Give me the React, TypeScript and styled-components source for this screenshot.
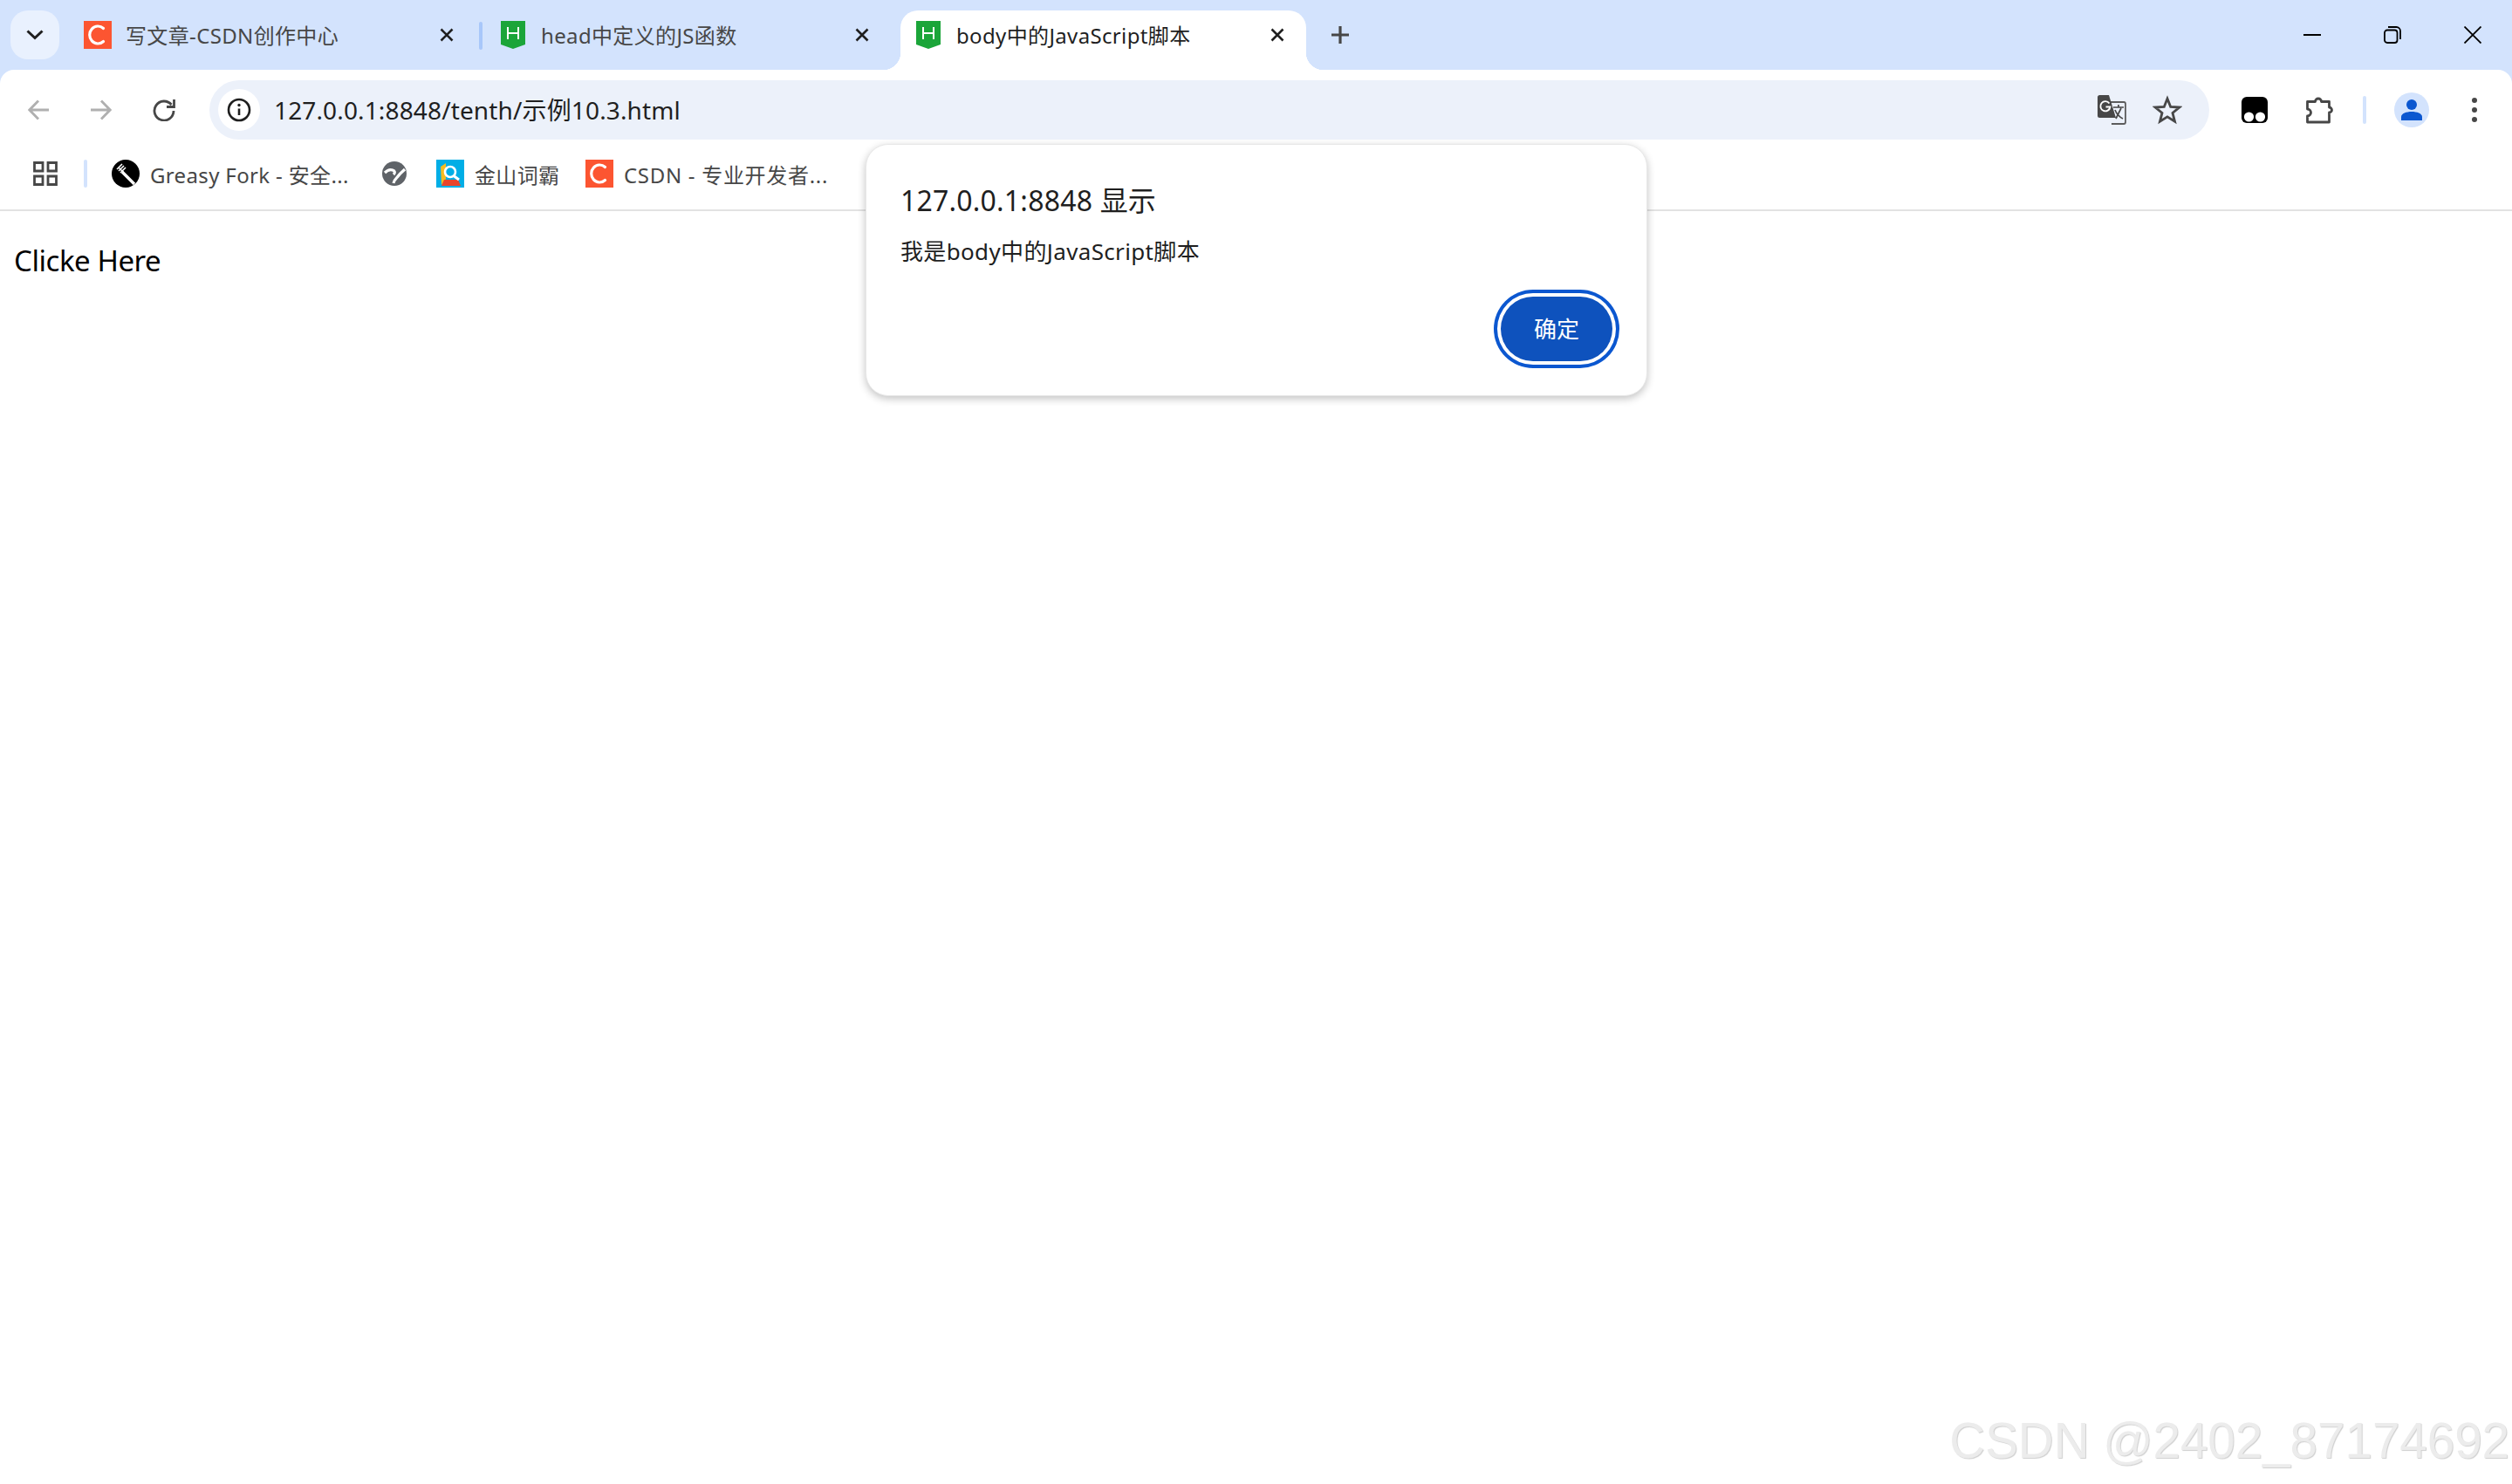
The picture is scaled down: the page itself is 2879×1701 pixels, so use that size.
import React from "react";
import styled, { createGlobalStyle } from "styled-components";

const UI_FONT = `"Noto Sans", "Noto Sans CJK SC", sans-serif`;

const Global = createGlobalStyle`
  html, body {
    margin: 0;
    padding: 0;
    background: #fff;
    overflow: hidden;
  }
  * {
    box-sizing: border-box;
  }
`;

const Page = styled.div`
  position: relative;
  width: 2879px;
  height: 1701px;
  background: #d3e3fd;
  font-family: ${UI_FONT};
  overflow: hidden;
`;

/* tab strip */
const TabStrip = styled.div`
  display: flex;
  align-items: flex-end;
  height: 80px;
`;

const TabSearch = styled.div`
  display: flex;
  align-items: center;
  justify-content: center;
  width: 56px;
  height: 56px;
  margin: 0 12px 12px 12px;
  border-radius: 20px;
  background: #e9f1fe;
`;

const Tab = styled.div<{ $active?: boolean }>`
  position: relative;
  display: flex;
  align-items: center;
  width: 465px;
  height: 68px;
  padding: 0 0 12px 16px;
  border-radius: 20px 20px 0 0;
  background: ${(p) => (p.$active ? "#fff" : "transparent")};
  color: ${(p) => (p.$active ? "#1f1f1f" : "#474747")};

  ${(p) =>
    p.$active &&
    `
    &::before, &::after {
      content: "";
      position: absolute;
      bottom: 0;
      width: 20px;
      height: 20px;
    }
    &::before {
      left: -20px;
      background: radial-gradient(circle at 0 0, #d3e3fd 20px, #fff 20.5px);
    }
    &::after {
      right: -20px;
      background: radial-gradient(circle at 100% 0, #d3e3fd 20px, #fff 20.5px);
    }
  `}
`;

const TabTitle = styled.span`
  margin-left: 16px;
  font-size: 24px;
  line-height: 32px;
  white-space: nowrap;
  letter-spacing: 0.35px;
  transform: translateY(1px);
`;

const TabClose = styled.span`
  position: absolute;
  left: 420px;
  top: 16px;
  display: flex;
  width: 24px;
  height: 24px;
`;

const TabGap = styled.div<{ $line?: boolean }>`
  display: flex;
  justify-content: center;
  width: 11px;
  height: 68px;
  padding-top: 13px;

  &::after {
    content: "";
    display: ${(p) => (p.$line ? "block" : "none")};
    width: 4px;
    height: 32px;
    border-radius: 2px;
    background: #a8c7fa;
  }
`;

const NewTab = styled.div`
  display: flex;
  align-items: center;
  justify-content: center;
  width: 56px;
  height: 56px;
  margin-bottom: 12px;
`;

const WindowControls = styled.div`
  display: flex;
  margin-left: auto;
  margin-right: -1px;
  height: 80px;
`;

const WindowButton = styled.div`
  display: flex;
  align-items: center;
  justify-content: center;
  width: 92px;
`;

/* toolbar */
const Toolbar = styled.div`
  display: flex;
  align-items: flex-start;
  height: 80px;
  padding: 12px 0 0 8px;
  background: #fff;
  border-radius: 16px 16px 0 0;
`;

const NavButton = styled.div`
  display: flex;
  align-items: center;
  justify-content: center;
  width: 72px;
  height: 68px;
`;

const Omnibox = styled.div`
  display: flex;
  align-items: center;
  flex: 1;
  height: 68px;
  margin-left: 16px;
  padding: 0 31px 0 10px;
  border-radius: 34px;
  background: #ecf1fa;
`;

const InfoChip = styled.div`
  display: flex;
  align-items: center;
  justify-content: center;
  width: 48px;
  height: 48px;
  border-radius: 50%;
  background: #fff;
`;

const Url = styled.span`
  margin-left: 16px;
  margin-bottom: 2px;
  font-size: 28px;
  color: #1f1f1f;
  white-space: nowrap;
  letter-spacing: 0.14px;
`;

const OmniActions = styled.div`
  display: flex;
  align-items: center;
  gap: 30px;
  margin-left: auto;
`;

const ToolbarActions = styled.div`
  display: flex;
  align-items: center;
  width: 347px;
  height: 68px;
  padding-left: 16px;
`;

const ActionButton = styled.div<{ $after?: number }>`
  display: flex;
  align-items: center;
  justify-content: center;
  width: 72px;
  height: 68px;
  margin-left: ${(p) => p.$after ?? 0}px;
`;

const ToolbarDivider = styled.div`
  width: 4px;
  height: 32px;
  margin-left: 14px;
  margin-right: 16px;
  border-radius: 2px;
  background: #d3e3fd;
`;

const Avatar = styled.div`
  display: flex;
  align-items: center;
  justify-content: center;
  width: 40px;
  height: 40px;
  border-radius: 50%;
  background: #d3e3fd;
`;

/* bookmarks bar */
const BookmarksBar = styled.div`
  display: flex;
  align-items: center;
  height: 82px;
  padding: 0 0 2px 38px;
  background: #fff;
  border-bottom: 2px solid #e2e2e2;
`;

const BarDivider = styled.div`
  width: 4px;
  height: 32px;
  margin: 0 28px 0 30px;
  border-radius: 2px;
  background: #d3e3fd;
`;

const Bookmark = styled.div`
  display: flex;
  align-items: center;
  margin-right: 32px;
`;

const BookmarkTitle = styled.span<{ $width: number; $spacing?: number }>`
  width: ${(p) => p.$width}px;
  margin-left: 12px;
  margin-top: 3px;
  font-size: 24px;
  line-height: 32px;
  color: #474747;
  white-space: nowrap;
  letter-spacing: ${(p) => p.$spacing ?? 0.35}px;
`;

/* page content */
const Content = styled.main`
  height: 1539px;
  padding: 35px 16px;
  background: #fff;
`;

const ClickText = styled.div`
  font-size: 33px;
  line-height: 44px;
  color: #000;
  letter-spacing: -0.45px;
`;

/* alert */
const Dialog = styled.div`
  position: absolute;
  left: 992px;
  top: 165px;
  display: flex;
  flex-direction: column;
  width: 896px;
  height: 289px;
  padding: 42px 31px 31px 39px;
  background: #fff;
  border: 1px solid #e8e8e8;
  border-radius: 26px;
  box-shadow: 0 3px 10px rgba(0, 0, 0, 0.24);
`;

const DialogTitle = styled.div`
  font-size: 32px;
  line-height: 44px;
  color: #1f1f1f;
  white-space: nowrap;
  letter-spacing: 0.2px;
`;

const DialogMessage = styled.div`
  margin-top: 18px;
  font-size: 26px;
  line-height: 36px;
  color: #1f1f1f;
  white-space: nowrap;
  letter-spacing: 0.35px;
`;

const DialogFooter = styled.div`
  display: flex;
  justify-content: flex-end;
  margin-top: auto;
`;

const ConfirmButton = styled.button`
  width: 128px;
  height: 74px;
  margin: 8px;
  padding: 0 0 2px;
  border: none;
  border-radius: 37px;
  background: #0e52bd;
  box-shadow: 0 0 0 4px #fff, 0 0 0 8px #0b57d0;
  color: #fff;
  font-family: ${UI_FONT};
  font-size: 26px;
`;

const Watermark = styled.div`
  position: absolute;
  right: 3px;
  top: 1620px;
  font-family: "Liberation Sans", sans-serif;
  font-size: 56.5px;
  line-height: 64px;
  color: #ececec;
  text-shadow: 1px 1px 1px #cfcfcf;
  white-space: nowrap;
`;

/* icons */
const CsdnIcon = () => (
  <svg width="32" height="32" viewBox="0 0 32 32">
    <rect width="32" height="32" fill="#fc5531" />
    <path d="M22.5 8.5A9.5 10 0 1 0 22.5 23.5" fill="none" stroke="#fff" strokeWidth="3.2" strokeLinecap="round" />
  </svg>
);

const ShieldIcon = () => (
  <svg width="32" height="32" viewBox="0 0 32 32">
    <path d="M2 0H30V27L16 32 2 27Z" fill="#1ba539" />
    <path d="M10 7V21M22 7V21M10 14H22" fill="none" stroke="#fff" strokeWidth="2" />
  </svg>
);

const GreasyIcon = () => (
  <svg width="32" height="32" viewBox="0 0 32 32">
    <circle cx="16" cy="16" r="16" fill="#000" />
    <path d="M6 11l6-6M8 13l6-6M10 15l6-6M7.5 8.5l6 6" stroke="#fff" strokeWidth="1.6" fill="none" />
    <path d="M12 14l14 14" stroke="#fff" strokeWidth="3.4" fill="none" />
  </svg>
);

const GlobeIcon = () => (
  <svg width="32" height="32" viewBox="0 0 32 32">
    <circle cx="16" cy="16" r="14" fill="#5f6368" />
    <path d="M5 15C8 12 11 11 14 12S17 15 15 17" stroke="#fff" strokeWidth="3.2" fill="none" />
    <path d="M28 11C25 14 23 15 21 18S16 22 15 27" stroke="#fff" strokeWidth="3.2" fill="none" />
  </svg>
);

const JinshanIcon = () => (
  <svg width="32" height="32" viewBox="0 0 32 32">
    <rect width="32" height="32" fill="#00aee6" />
    <path d="M5 8L11 4V22L6 29Z" fill="#f6bb1f" />
    <path d="M6 30L9 23H25L28 30Z" fill="#e9442b" />
    <circle cx="16" cy="14" r="6" fill="#00aee6" stroke="#fff" strokeWidth="2.6" />
    <path d="M20 18.5L26 23" stroke="#fff" strokeWidth="3" />
  </svg>
);

const Chevron = () => (
  <svg width="24" height="16" viewBox="0 0 24 16">
    <path d="M3.5 3.5L12 11.5 20.5 3.5" fill="none" stroke="#1f1f1f" strokeWidth="3" />
  </svg>
);

const CloseGlyph = () => (
  <svg width="24" height="24" viewBox="0 0 24 24">
    <path d="M5.5 5.5L18.5 18.5M18.5 5.5L5.5 18.5" stroke="#1f1f1f" strokeWidth="2.6" />
  </svg>
);

const Plus = () => (
  <svg width="24" height="24" viewBox="0 0 24 24">
    <path d="M12 2V22M2 12H22" stroke="#474747" strokeWidth="3.2" />
  </svg>
);

const Arrow = ({ flip }: { flip?: boolean }) => (
  <svg width="24" height="24" viewBox="0 0 24 24" style={flip ? { transform: "scaleX(-1)" } : undefined}>
    <path d="M24 12H2M12 1.5L1.8 12 12 22.5" fill="none" stroke="#b0b0b0" strokeWidth="2.8" />
  </svg>
);

const Reload = () => (
  <svg width="26" height="26" viewBox="0 0 26 26">
    <path d="M21.5 7A11 11 0 1 0 24 14" fill="none" stroke="#474747" strokeWidth="2.8" />
    <path d="M24.5 1V9.5H16" fill="none" stroke="#474747" strokeWidth="2.8" />
  </svg>
);

const InfoIcon = () => (
  <svg width="28" height="28" viewBox="0 0 28 28">
    <circle cx="14" cy="14" r="12" fill="none" stroke="#1f1f1f" strokeWidth="2.6" />
    <path d="M14 12.5V20" stroke="#1f1f1f" strokeWidth="2.6" />
    <circle cx="14" cy="8.5" r="1.7" fill="#1f1f1f" />
  </svg>
);

const TranslateIcon = () => (
  <svg width="34" height="34" viewBox="0 0 34 34">
    <path d="M15 8H31A2 2 0 0 1 33 10V31A2 2 0 0 1 31 33H17" fill="none" stroke="#5c5c5c" strokeWidth="1.8" />
    <path d="M19 14H31M25 11V14M22 27L28 15M21 17C23 22 26 25 30 27" fill="none" stroke="#474747" strokeWidth="1.7" />
    <path d="M1 2.5A2.5 2.5 0 0 1 3.5 0H14L22 26H3.5A2.5 2.5 0 0 1 1 23.5Z" fill="#474747" />
    <path d="M14.5 9.5A5.6 5.6 0 1 0 15.5 13.5H10.5" fill="none" stroke="#fff" strokeWidth="1.9" />
  </svg>
);

const StarIcon = () => (
  <svg width="34" height="34" viewBox="0 0 34 34">
    <path d="M17 4L20.7 13.4 30.8 14 23 20.4 25.5 30.2 17 24.8 8.5 30.2 11 20.4 3.2 14 13.3 13.4Z" fill="none" stroke="#474747" strokeWidth="2.8" />
  </svg>
);

const MonkeyIcon = () => (
  <svg width="30" height="30" viewBox="0 0 30 30">
    <rect width="30" height="30" rx="6" fill="#000" />
    <circle cx="8.5" cy="23" r="5.6" fill="#fff" />
    <circle cx="21.5" cy="23" r="5.6" fill="#fff" />
  </svg>
);

const PuzzleIcon = () => (
  <svg width="32" height="32" viewBox="0 0 32 32">
    <path d="M2.5 6.5H11.5A3.5 3.5 0 0 1 18.5 6.5H27.5V13A3 3 0 0 1 27.5 19V30H2.5V23A4 4 0 0 0 2.5 15Z" fill="none" stroke="#474747" strokeWidth="2.8" strokeLinejoin="round" />
  </svg>
);

const Person = () => (
  <svg width="26" height="26" viewBox="0 0 26 26">
    <circle cx="13" cy="7" r="6" fill="#0b57d0" />
    <path d="M1 25V21C1 17 7 15 13 15S25 17 25 21V25Z" fill="#0b57d0" />
  </svg>
);

const Dots = () => (
  <svg width="8" height="30" viewBox="0 0 8 30">
    <circle cx="4" cy="4" r="3" fill="#474747" />
    <circle cx="4" cy="15" r="3" fill="#474747" />
    <circle cx="4" cy="26" r="3" fill="#474747" />
  </svg>
);

const AppsIcon = () => (
  <svg width="28" height="28" viewBox="0 0 28 28">
    <path d="M1.5 1.5H11V11H1.5ZM17 1.5H26.5V11H17ZM1.5 17H11V26.5H1.5ZM17 17H26.5V26.5H17Z" fill="none" stroke="#474747" strokeWidth="2.8" />
  </svg>
);

const Minimize = () => (
  <svg width="20" height="4" viewBox="0 0 20 4">
    <path d="M0 2H20" stroke="#000" strokeWidth="2" />
  </svg>
);

const Restore = () => (
  <svg width="20" height="20" viewBox="0 0 20 20">
    <rect x="1" y="4.5" width="14.5" height="14.5" rx="3" fill="none" stroke="#000" strokeWidth="1.8" />
    <path d="M5 1H14.5A4.5 4.5 0 0 1 19 5.5V15" fill="none" stroke="#000" strokeWidth="1.8" />
  </svg>
);

const WinClose = () => (
  <svg width="20" height="20" viewBox="0 0 20 20">
    <path d="M0.5 0.5L19.5 19.5M19.5 0.5L0.5 19.5" stroke="#000" strokeWidth="1.8" />
  </svg>
);

export default function App() {
  return (
    <Page>
      <Global />
      <TabStrip>
        <TabSearch>
          <Chevron />
        </TabSearch>
        <Tab>
          <CsdnIcon />
          <TabTitle>写文章-CSDN创作中心</TabTitle>
          <TabClose>
            <CloseGlyph />
          </TabClose>
        </Tab>
        <TabGap $line />
        <Tab>
          <ShieldIcon />
          <TabTitle>head中定义的JS函数</TabTitle>
          <TabClose>
            <CloseGlyph />
          </TabClose>
        </Tab>
        <TabGap />
        <Tab $active>
          <ShieldIcon />
          <TabTitle>body中的JavaScript脚本</TabTitle>
          <TabClose>
            <CloseGlyph />
          </TabClose>
        </Tab>
        <TabGap />
        <NewTab>
          <Plus />
        </NewTab>
        <WindowControls>
          <WindowButton>
            <Minimize />
          </WindowButton>
          <WindowButton>
            <Restore />
          </WindowButton>
          <WindowButton>
            <WinClose />
          </WindowButton>
        </WindowControls>
      </TabStrip>

      <Toolbar>
        <NavButton>
          <Arrow />
        </NavButton>
        <NavButton>
          <Arrow flip />
        </NavButton>
        <NavButton>
          <Reload />
        </NavButton>
        <Omnibox>
          <InfoChip>
            <InfoIcon />
          </InfoChip>
          <Url>127.0.0.1:8848/tenth/示例10.3.html</Url>
          <OmniActions>
            <TranslateIcon />
            <StarIcon />
          </OmniActions>
        </Omnibox>
        <ToolbarActions>
          <ActionButton>
            <MonkeyIcon />
          </ActionButton>
          <ActionButton $after={2}>
            <PuzzleIcon />
          </ActionButton>
          <ToolbarDivider />
          <ActionButton>
            <Avatar>
              <Person />
            </Avatar>
          </ActionButton>
          <ActionButton>
            <Dots />
          </ActionButton>
        </ToolbarActions>
      </Toolbar>

      <BookmarksBar>
        <AppsIcon />
        <BarDivider />
        <Bookmark>
          <GreasyIcon />
          <BookmarkTitle $width={232}>Greasy Fork - 安全...</BookmarkTitle>
        </Bookmark>
        <Bookmark>
          <GlobeIcon />
        </Bookmark>
        <Bookmark>
          <JinshanIcon />
          <BookmarkTitle $width={95}>金山词霸</BookmarkTitle>
        </Bookmark>
        <Bookmark>
          <CsdnIcon />
          <BookmarkTitle $width={232} $spacing={0.7}>CSDN - 专业开发者...</BookmarkTitle>
        </Bookmark>
      </BookmarksBar>

      <Content>
        <ClickText>Clicke Here</ClickText>
      </Content>

      <Dialog>
        <DialogTitle>127.0.0.1:8848 显示</DialogTitle>
        <DialogMessage>我是body中的JavaScript脚本</DialogMessage>
        <DialogFooter>
          <ConfirmButton>确定</ConfirmButton>
        </DialogFooter>
      </Dialog>

      <Watermark>CSDN @2402_87174692</Watermark>
    </Page>
  );
}
